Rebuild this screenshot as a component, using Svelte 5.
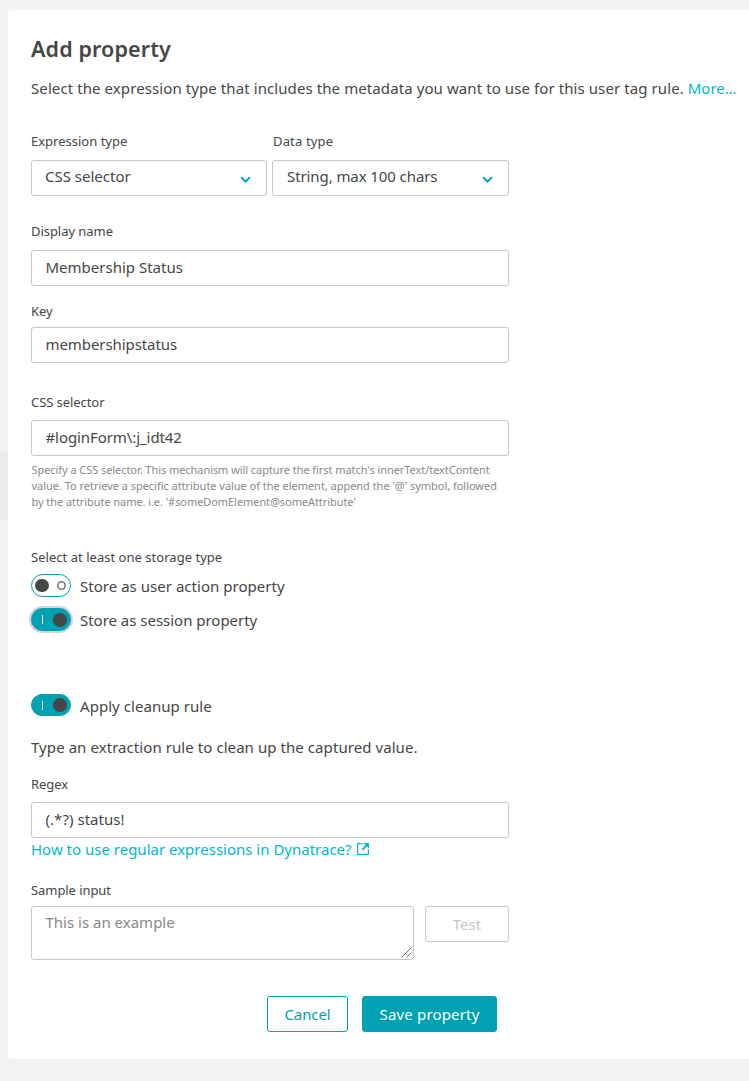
<script>
  let displayName = $state('Membership Status');
  let key = $state('membershipstatus');
  let selector = $state('#loginForm\\:j_idt42');
  let regex = $state('(.*?) status!');
  let sample = $state('');
  let userAction = $state(false);
  let session = $state(true);
  let cleanup = $state(true);
</script>

{#snippet chevron()}
  <svg class="chevron" width="11" height="8" viewBox="0 0 11 8" aria-hidden="true">
    <path d="M1.1 1.1 5.5 5.6 9.9 1.1" fill="none" stroke="#00a1b2" stroke-width="1.9" />
  </svg>
{/snippet}

{#snippet knob(on)}
  {#if on}
    <span class="bar"></span><span class="knob"></span>
  {:else}
    <span class="knob"></span><span class="ring"></span>
  {/if}
{/snippet}

<div class="page">
  <div class="rail"></div>
  <main class="card">
    <h1>Add property</h1>
    <p class="intro">Select the expression type that includes the metadata you want to use for this user tag rule. <a href="#more">More...</a></p>

    <div class="selects">
      <div class="field">
        <span class="label expr">Expression type</span>
        <button class="select first"><span>CSS selector</span>{@render chevron()}</button>
      </div>
      <div class="field">
        <span class="label data">Data type</span>
        <button class="select second"><span>String, max 100 chars</span>{@render chevron()}</button>
      </div>
    </div>

    <label class="field display">
      <span class="label">Display name</span>
      <input class="wide" bind:value={displayName} />
    </label>
    <label class="field key">
      <span class="label">Key</span>
      <input class="tight" bind:value={key} />
    </label>
    <label class="field css">
      <span class="label narrow">CSS selector</span>
      <input class="tight" bind:value={selector} />
    </label>
    <p class="hint">
      <span class="l1">Specify a CSS selector. This mechanism will capture the first match's innerText/textContent</span>
      <span class="l2">value. To retrieve a specific attribute value of the element, append the '@' symbol, followed</span>
      <span class="l3">by the attribute name. i.e. '#someDomElement@someAttribute'</span>
    </p>

    <span class="label storage">Select at least one storage type</span>
    <div class="toggle-row r1">
      <button class="toggle" class:on={userAction} aria-label="Store as user action property" onclick={() => (userAction = !userAction)}>{@render knob(userAction)}</button>
      <span class="s1">Store as user action property</span>
    </div>
    <div class="toggle-row r2">
      <button class="toggle focused" class:on={session} aria-label="Store as session property" onclick={() => (session = !session)}>{@render knob(session)}</button>
      <span class="s2">Store as session property</span>
    </div>
    <div class="toggle-row r3">
      <button class="toggle short" class:on={cleanup} aria-label="Apply cleanup rule" onclick={() => (cleanup = !cleanup)}>{@render knob(cleanup)}</button>
      <span class="s3">Apply cleanup rule</span>
    </div>

    <p class="extract">Type an extraction rule to clean up the captured value.</p>
    <label class="field regex">
      <span class="label narrow">Regex</span>
      <input bind:value={regex} />
    </label>
    <a class="help" href="#regex">
      <span>How to use regular expressions in Dynatrace?</span>
      <svg width="12" height="12" viewBox="0 0 12 12" aria-hidden="true">
        <path d="M5.5 .6H.6V11.4H11.4V6.5" fill="none" stroke="#00b9cc" stroke-width="1.2" />
        <path d="M6.5 0H12V5.5Z" fill="#00b9cc" />
        <path d="M10 2 5.2 6.8" fill="none" stroke="#00b9cc" stroke-width="1.8" />
      </svg>
    </a>

    <span class="label narrow sample-label">Sample input</span>
    <div class="sample">
      <div class="area">
        <textarea placeholder="This is an example" bind:value={sample}></textarea>
        <svg class="grip" width="11" height="11" viewBox="0 0 11 11" aria-hidden="true">
          <path d="M.5 10.5 10.5.5M5.5 10.5 10.5 5.5" fill="none" stroke="#666" stroke-width="1" />
        </svg>
      </div>
      <button class="btn test" disabled>Test</button>
    </div>

    <div class="actions">
      <button class="btn cancel">Cancel</button>
      <button class="btn save">Save property</button>
    </div>
  </main>
</div>

<style>
  :global(body) { background: #f2f2f2; overflow: hidden; }
  .page {
    display: grid;
    grid-template-columns: 8px 1fr;
    box-sizing: border-box;
    height: 1081px;
    padding-top: 10px;
    overflow: hidden;
    font-family: "Noto Sans", sans-serif;
    font-size: 15px;
    line-height: 20px;
    color: #454646;
  }
  .rail { height: 68px; margin-top: 442px; background: #ebebeb; }
  .card {
    box-sizing: border-box;
    display: flex;
    flex-direction: column;
    align-items: flex-start;
    height: 1049px;
    padding: 24px 0 0 23px;
    background: #fff;
    border-radius: 3px 0 0 3px;
    white-space: nowrap;
  }
  h1, p { margin: 0; }
  h1 { font-size: 21.5px; font-weight: 600; line-height: 30px; letter-spacing: .12px; }
  a { color: #00b9cc; text-decoration: none; }
  .intro { margin-top: 14px; letter-spacing: .09px; }
  .intro a { letter-spacing: -.05px; }
  .selects { display: flex; gap: 5px; margin-top: 33px; }
  .field { display: flex; flex-direction: column; gap: 9px; }
  .label { font-size: 13px; line-height: 20px; letter-spacing: -.05px; }
  .label.expr { letter-spacing: 0; }
  .label.data { letter-spacing: .15px; padding-left: 1px; }
  .label.narrow { letter-spacing: -.07px; }
  input, .select, textarea {
    box-sizing: border-box;
    width: 478px;
    height: 36px;
    margin: 0;
    padding: 0 14px 2px 13.5px;
    border: 1px solid #c7c9c9;
    border-radius: 3px;
    background: #fff;
    color: #454646;
    font: inherit;
    letter-spacing: .04px;
    outline: none;
  }
  input.wide { letter-spacing: 0; }
  input.tight { letter-spacing: -.08px; }
  .select {
    display: flex;
    align-items: center;
    justify-content: space-between;
    width: 237px;
    padding: 0 15px 4px 14px;
  }
  .select.first { width: 236px; padding-left: 13px; letter-spacing: 0; }
  .select.second { letter-spacing: -.09px; }
  .chevron { margin-top: 7px; }
  .display { margin-top: 25px; }
  .key { margin-top: 15px; gap: 6px; }
  .css { margin-top: 29px; gap: 8px; }
  .hint {
    display: flex;
    flex-direction: column;
    margin: 6px 0 0 .5px;
    font-size: 11px;
    line-height: 16px;
    color: #898989;
  }
  .hint .l1 { letter-spacing: -.06px; }
  .hint .l2 { letter-spacing: -.03px; }
  .hint .l3 { letter-spacing: -.065px; }
  .storage { margin-top: 37px; letter-spacing: .03px; }
  .toggle-row { display: flex; align-items: flex-start; gap: 9px; height: 24px; line-height: 24px; }
  .r1 { margin-top: 7px; }
  .r2 { margin-top: 10px; }
  .r3 { margin-top: 62px; }
  .s1 { letter-spacing: .03px; }
  .s2 { letter-spacing: -.02px; }
  .s3 { letter-spacing: .05px; }
  .toggle {
    box-sizing: border-box;
    display: flex;
    align-items: center;
    justify-content: space-between;
    width: 40px;
    height: 23px;
    padding: 0 4px 0 3px;
    border: 1px solid #00a1b2;
    border-radius: 12px;
    background: #fff;
  }
  .toggle.on { padding: 0 3px 0 10px; background: #00a1b2; }
  .toggle.short { height: 22px; }
  .toggle.focused { box-shadow: 0 0 0 2px #d4d4d4; }
  .knob { width: 14px; height: 13px; border-radius: 7px; background: #454646; }
  .on .knob { height: 14px; }
  .ring { width: 7px; height: 7px; border: 1px solid #555; border-radius: 50%; box-shadow: inset 0 0 0 .5px #777; }
  .bar { width: 1px; height: 9px; background: #fff; }
  .extract { margin-top: 19px; letter-spacing: .07px; }
  .regex { margin-top: 17px; gap: 8px; }
  .help { display: flex; align-items: center; gap: 5px; margin-top: 1px; letter-spacing: 0; }
  .help svg { margin-top: -1px; }
  .sample-label { margin-top: 21px; }
  .sample { display: flex; align-items: flex-start; gap: 11px; margin-top: 6px; }
  .area { position: relative; }
  .grip { position: absolute; right: 2px; bottom: 2px; }
  textarea { display: block; width: 383px; height: 54px; padding: 5px 13.5px; resize: none; letter-spacing: 0; }
  textarea::placeholder { color: #898989; }
  .btn {
    box-sizing: border-box;
    height: 36px;
    padding: 0;
    border: 1px solid #00a1b2;
    border-radius: 3px;
    background: #fff;
    color: #00a1b2;
    font: inherit;
  }
  .test { width: 84px; border-color: #ccc; color: #c7c9c9; }
  .actions { display: flex; gap: 14px; margin: 36px 0 0 236px; }
  .cancel { width: 81px; letter-spacing: -.1px; }
  .save { width: 135px; background: #00a1b2; color: #fff; letter-spacing: .17px; }
</style>
